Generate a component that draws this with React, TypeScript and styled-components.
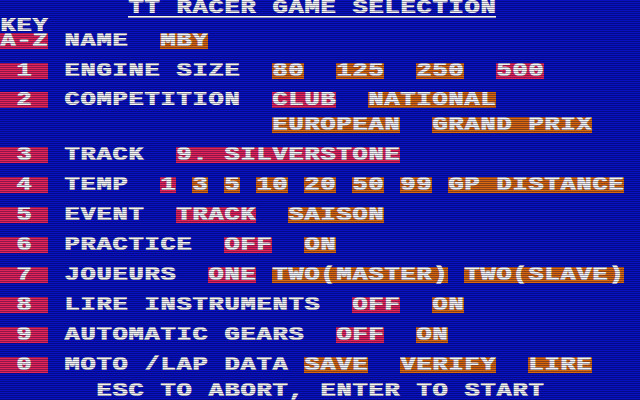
import React from "react";
import styled, { createGlobalStyle } from "styled-components";

const GlobalStyle = createGlobalStyle`
  html, body { margin: 0; padding: 0; background: #0812c0; }
  #root { width: 640px; height: 400px; }
`;

const Screen = styled.div`
  position: relative;
  width: 640px;
  height: 400px;
  overflow: hidden;
  background: #0812c0;
  color: #f6f6f6;
  font-family: "Liberation Mono", "DejaVu Sans Mono", monospace;
  font-weight: 700;
  font-size: 20px;
  display: flex;
  flex-direction: column;
`;

const Scanlines = styled.div`
  position: absolute;
  inset: 0;
  pointer-events: none;
  background: repeating-linear-gradient(
    to bottom,
    rgba(0, 0, 0, 0) 0px,
    rgba(0, 0, 0, 0) 1px,
    rgba(0, 0, 40, 0.38) 1px,
    rgba(0, 0, 40, 0.38) 2px
  );
`;

const Line = styled.div<{ $mt?: number }>`
  display: grid;
  grid-template-columns: repeat(40, 16px);
  height: 15px;
  margin-top: ${(p) => p.$mt ?? 0}px;
`;

const Cell = styled.div<{ $col: number; $span: number }>`
  grid-column: ${(p) => p.$col + 1} / span ${(p) => p.$span};
  height: 15px;
  line-height: 16px;
  white-space: pre;
`;

/* CPC characters are wide: stretch each glyph run so one character = 16px */
const Glyphs = styled.span`
  display: inline-block;
  letter-spacing: 0.8px;
  transform: scaleX(1.25);
  transform-origin: left center;
  text-shadow: 0.9px 0 0 currentColor;
`;

const Title = styled(Cell)`
  height: 15px;
  line-height: 15px;
  padding-bottom: 1px;
  border-bottom: 2px solid #f6f6f6;
`;

const Chip = styled(Cell)<{ $tone: "red" | "orange" }>`
  background: ${(p) => (p.$tone === "red" ? "#e2245a" : "#d86810")};
  height: 16px;
`;

const KeyBar = styled(Cell)`
  background: #e2245a;
  height: 16px;
  padding-left: 16px;
`;

type Opt = [number, string, "red" | "orange"];

const Text = ({ col, children }: { col: number; children: string }) => (
  <Cell $col={col} $span={children.length}>
    <Glyphs>{children}</Glyphs>
  </Cell>
);

const Option = ({ opt }: { opt: Opt }) => (
  <Chip $col={opt[0]} $span={opt[1].length} $tone={opt[2]}>
    <Glyphs>{opt[1]}</Glyphs>
  </Chip>
);

type Row = { key: string; label: string; opts: Opt[]; extra?: Opt[] };

const rows: Row[] = [
  {
    key: "1",
    label: "ENGINE SIZE",
    opts: [
      [17, "80", "orange"],
      [21, "125", "orange"],
      [26, "250", "orange"],
      [31, "500", "red"],
    ],
  },
  {
    key: "2",
    label: "COMPETITION",
    opts: [
      [17, "CLUB", "red"],
      [23, "NATIONAL", "orange"],
    ],
    extra: [
      [17, "EUROPEAN", "orange"],
      [27, "GRAND PRIX", "orange"],
    ],
  },
  { key: "3", label: "TRACK", opts: [[11, "9. SILVERSTONE", "red"]] },
  {
    key: "4",
    label: "TEMP",
    opts: [
      [10, "1", "red"],
      [12, "3", "orange"],
      [14, "5", "orange"],
      [16, "10", "orange"],
      [19, "20", "orange"],
      [22, "50", "orange"],
      [25, "99", "orange"],
      [28, "GP DISTANCE", "orange"],
    ],
  },
  {
    key: "5",
    label: "EVENT",
    opts: [
      [11, "TRACK", "red"],
      [18, "SAISON", "orange"],
    ],
  },
  {
    key: "6",
    label: "PRACTICE",
    opts: [
      [14, "OFF", "red"],
      [19, "ON", "orange"],
    ],
  },
  {
    key: "7",
    label: "JOUEURS",
    opts: [
      [13, "ONE", "red"],
      [17, "TWO(MASTER)", "orange"],
      [29, "TWO(SLAVE)", "orange"],
    ],
  },
  {
    key: "8",
    label: "LIRE INSTRUMENTS",
    opts: [
      [22, "OFF", "red"],
      [27, "ON", "orange"],
    ],
  },
  {
    key: "9",
    label: "AUTOMATIC GEARS",
    opts: [
      [21, "OFF", "red"],
      [26, "ON", "orange"],
    ],
  },
  {
    key: "0",
    label: "MOTO /LAP DATA",
    opts: [
      [19, "SAVE", "orange"],
      [25, "VERIFY", "orange"],
      [33, "LIRE", "orange"],
    ],
  },
];

const margins: Record<string, number> = {
  "1": 15,
  "2": 14,
  "3": 15,
};

export default function App() {
  return (
    <>
      <GlobalStyle />
      <Screen>
        <Line>
          <Title $col={8} $span={23}>
            <Glyphs>TT RACER GAME SELECTION</Glyphs>
          </Title>
        </Line>
        <Line $mt={3}>
          <Text col={0}>KEY</Text>
        </Line>
        <Line>
          <Chip $col={0} $span={3} $tone="red">
            <Glyphs>A-Z</Glyphs>
          </Chip>
          <Text col={4}>NAME</Text>
          <Option opt={[10, "MBY", "orange"]} />
        </Line>
        {rows.map((r) => (
          <React.Fragment key={r.key}>
            <Line $mt={margins[r.key] ?? 15}>
              <KeyBar $col={0} $span={3}>
                <Glyphs>{r.key}</Glyphs>
              </KeyBar>
              <Text col={4}>{r.label}</Text>
              {r.opts.map((o) => (
                <Option key={o[1] + o[0]} opt={o} />
              ))}
            </Line>
            {r.extra && (
              <Line $mt={10}>
                {r.extra.map((o) => (
                  <Option key={o[1] + o[0]} opt={o} />
                ))}
              </Line>
            )}
          </React.Fragment>
        ))}
        <Line $mt={11}>
          <Text col={6}>ESC TO ABORT, ENTER TO START</Text>
        </Line>
        <Scanlines />
      </Screen>
    </>
  );
}
